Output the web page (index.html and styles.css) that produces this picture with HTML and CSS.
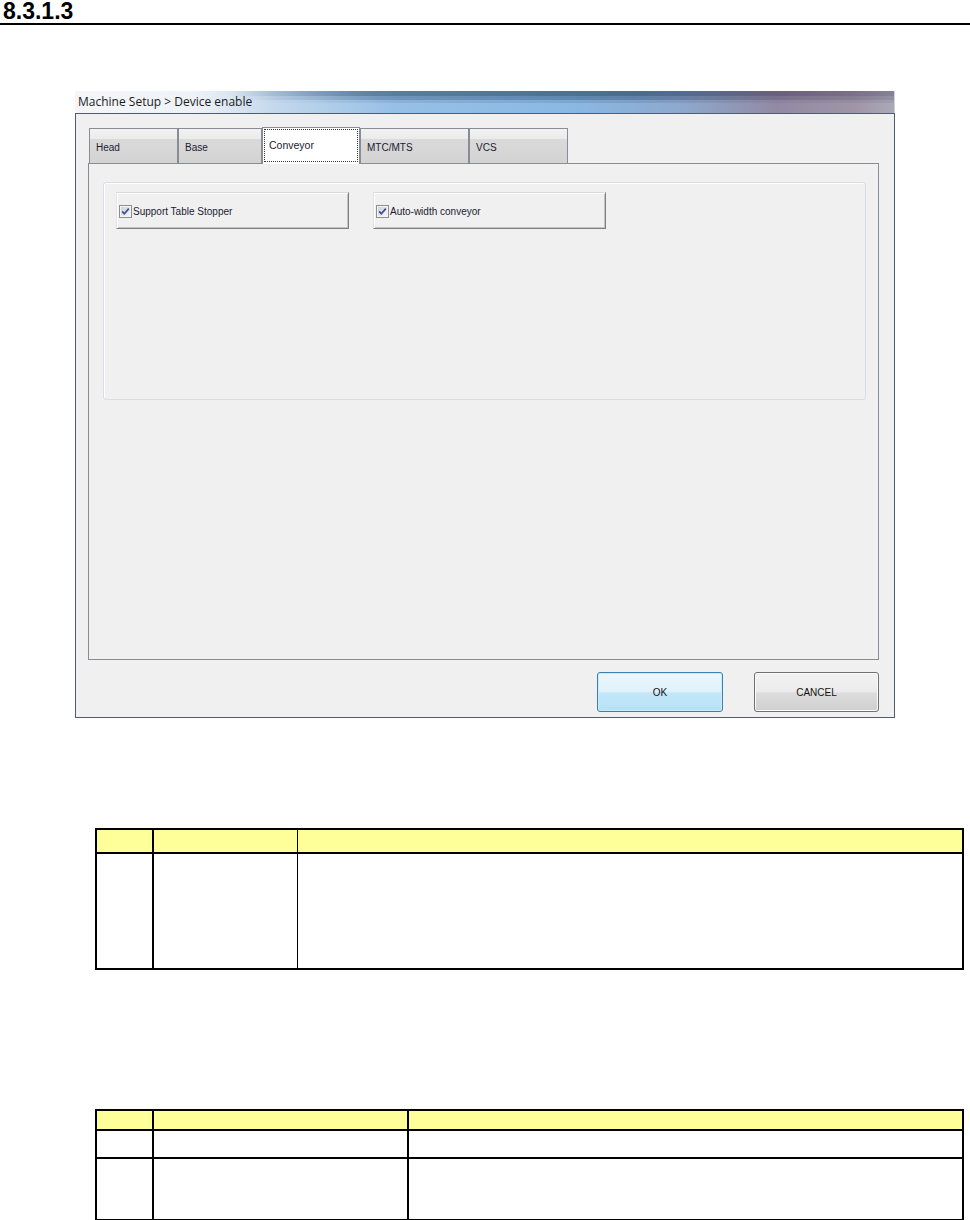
FILE: index.html
```html
<!DOCTYPE html>
<html lang="en">
<head>
    <meta charset="UTF-8">
    <meta name="viewport" content="width=device-width, initial-scale=1.0">
    <title>8.3.1.3 Device enable</title>
    <link rel="stylesheet" href="styles.css">
</head>
<body>
    <h1 class="section-no">8.3.1.3</h1>

    <div class="window">
        <div class="titlebar">Machine Setup &gt; Device enable</div>
        <div class="window-body">
            <div class="tabs">
                <div class="tab tab-head">Head</div>
                <div class="tab tab-base">Base</div>
                <div class="tab tab-conveyor active"><span class="focus">Conveyor</span></div>
                <div class="tab tab-mtc">MTC/MTS</div>
                <div class="tab tab-vcs">VCS</div>
            </div>
            <div class="tab-page">
                <div class="group">
                    <label class="check-btn">
                        <svg class="box" width="13" height="13" viewBox="0 0 13 13">
                            <defs>
                                <linearGradient id="cbFill" x1="0" y1="0" x2="1" y2="1">
                                    <stop offset="0" stop-color="#cbd3dc"/>
                                    <stop offset="1" stop-color="#f4f6f8"/>
                                </linearGradient>
                            </defs>
                            <rect x="0.5" y="0.5" width="12" height="12" fill="#f4f4f4" stroke="#8e8f8f"/>
                            <rect x="2" y="2" width="9" height="9" fill="url(#cbFill)"/>
                            <path d="M3.2 6.4 L5.3 8.8 L9.8 3.6" fill="none" stroke="#3d4f88" stroke-width="1.7"/>
                        </svg>
                        <span>Support Table Stopper</span>
                    </label>
                    <label class="check-btn">
                        <svg class="box" width="13" height="13" viewBox="0 0 13 13">
                            <rect x="0.5" y="0.5" width="12" height="12" fill="#f4f4f4" stroke="#8e8f8f"/>
                            <rect x="2" y="2" width="9" height="9" fill="url(#cbFill)"/>
                            <path d="M3.2 6.4 L5.3 8.8 L9.8 3.6" fill="none" stroke="#3d4f88" stroke-width="1.7"/>
                        </svg>
                        <span>Auto-width conveyor</span>
                    </label>
                </div>
            </div>
            <div class="dialog-buttons">
                <button class="btn btn-ok">OK</button>
                <button class="btn btn-cancel">CANCEL</button>
            </div>
        </div>
    </div>

    <table class="spec spec-1">
        <tr>
            <th class="c1"></th>
            <th class="c2"></th>
            <th class="c3"></th>
        </tr>
        <tr class="row-tall">
            <td></td>
            <td class="c2"></td>
            <td></td>
        </tr>
    </table>

    <table class="spec spec-2">
        <tr>
            <th class="c1"></th>
            <th class="c2"></th>
            <th class="c3"></th>
        </tr>
        <tr class="row-a">
            <td></td>
            <td></td>
            <td></td>
        </tr>
        <tr class="row-b">
            <td></td>
            <td></td>
            <td></td>
        </tr>
    </table>
</body>
</html>
```

FILE: styles.css
```css
body {
    margin: 0;
    background: #fff;
    font-family: "Liberation Sans", Arial, sans-serif;
    color: #000;
}

.section-no {
    margin: 0;
    padding: 0 0 1px 3px;
    font-size: 23px;
    line-height: 22px;
    font-weight: bold;
    border-bottom: 2px solid #000;
}

/* dialog window */
.window {
    width: 820px;
    margin: 66px 0 0 75px;
}

.titlebar {
    height: 22px;
    padding-left: 3px;
    font-family: "Open Sans", "Noto Sans", sans-serif;
    font-size: 12px;
    line-height: 22px;
    color: #1c1c1c;
    background:
        linear-gradient(to right, rgba(255,255,255,0) 150px, rgba(50,82,122,0.35) 290px, rgba(50,82,122,0.45) 560px, rgba(78,66,98,0.35) 700px, rgba(100,92,118,0.25) 830px) top / 100% 5px no-repeat,
        linear-gradient(to right, rgba(255,255,255,0) 160px, rgba(50,82,122,0.3) 300px, rgba(50,82,122,0.4) 560px, rgba(78,66,98,0.3) 700px, rgba(100,92,118,0.2) 830px) top / 100% 9px no-repeat,
        linear-gradient(to right, rgba(255,255,255,0) 180px, rgba(60,95,135,0.15) 320px, rgba(60,95,135,0.2) 560px, rgba(90,80,110,0.12) 720px) top / 100% 12px no-repeat,
        linear-gradient(to right, #f5f6f8 0, #eef2f7 120px, #c4d8ec 200px, #97c0e6 320px, #8ab8e2 500px, #8ea8cc 610px, #928aa4 700px, #9f95a6 780px, #aaaab9 820px);
    border-right: 1px solid #c9d4dc;
    box-sizing: border-box;
}

.window-body {
    display: flex;
    flex-direction: column;
    background: #f0f0f0;
    border: 1px solid #535c6d;
    padding: 14px 15px 5px 12px;
}

.tabs {
    display: flex;
    align-items: flex-end;
    height: 35px;
    margin-left: 1px;
}

.tab {
    box-sizing: border-box;
    height: 35px;
    padding: 13px 0 0 6px;
    font-size: 10px;
    color: #1b1b33;
    border: 1px solid #898c95;
    border-bottom: none;
    background: linear-gradient(#f2f2f2 0, #ebebeb 28%, #dadada 30%, #d3d3d3 100%);
}

.tab-head { width: 89px; }
.tab-base { width: 84px; }
.tab-conveyor { width: 98px; }
.tab-mtc { width: 109px; }
.tab-vcs { width: 99px; }

.tab.active {
    position: relative;
    z-index: 1;
    height: 37px;
    margin-bottom: -1px;
    padding: 1px;
    background: #fff;
    font-size: 10.5px;
}

.tab.active .focus {
    display: block;
    height: 33px;
    padding: 9px 0 0 4px;
    box-sizing: border-box;
    border: 1px dotted #333;
}

.tab-page {
    box-sizing: border-box;
    width: 791px;
    height: 497px;
    border: 1px solid #898c95;
    background: #f0f0f0;
    padding: 18px 0 0 14px;
}

.group {
    box-sizing: border-box;
    width: 763px;
    height: 218px;
    border: 1px solid #d5dfe5;
    border-radius: 3px;
    box-shadow: inset 1px 1px 0 #fff;
    padding: 9px 0 0 12px;
    display: flex;
    gap: 24px;
    align-items: flex-start;
}

.check-btn {
    box-sizing: border-box;
    width: 233px;
    height: 37px;
    display: flex;
    align-items: center;
    gap: 1px;
    padding: 1px 0 0 2px;
    font-size: 10px;
    color: #1b1b33;
    background: #f0f0f0;
    border: 1px solid;
    border-color: #dcdcdc #7f7f7f #7f7f7f #e4e4e4;
    box-shadow: inset 1px 1px 0 #fff, inset -1px -1px 0 #c4c4c4;
}

.dialog-buttons {
    display: flex;
    justify-content: flex-end;
    gap: 31px;
    margin-top: 12px;
}

.btn {
    height: 40px;
    border-radius: 3px;
    font-family: "Liberation Sans", Arial, sans-serif;
    font-size: 10px;
    color: #111;
    padding: 0;
}

.btn-ok {
    width: 126px;
    border: 1px solid #3c7fb1;
    background: linear-gradient(#eaf6fd 0, #dff2fc 50%, #c4e7f9 52%, #b6e0f6 100%);
    box-shadow: inset 0 0 0 1px #c8ecfb;
}

.btn-cancel {
    width: 125px;
    border: 1px solid #707070;
    background: linear-gradient(#f2f2f2 0, #ebebeb 50%, #dddddd 52%, #cfcfcf 100%);
    box-shadow: inset 0 0 0 1px #fafafa;
}

/* spec tables */
.spec {
    border-collapse: separate;
    border-spacing: 0;
    table-layout: fixed;
    width: 869px;
    margin-left: 95px;
    border-top: 2px solid #000;
    border-left: 2px solid #000;
}

.spec th,
.spec td {
    box-sizing: border-box;
    padding: 0;
    border-right: 2px solid #000;
    border-bottom: 2px solid #000;
}

.spec th {
    background: #ffff99;
}

.spec-1 {
    margin-top: 110px;
}

.spec-1 th { height: 24px; }
.spec-1 .c1 { width: 57px; }
.spec-1 .c2 { width: 144px; border-right-width: 1px; }
.spec-1 .c3 { width: 666px; }
.spec-1 .row-tall td { height: 116px; }

.spec-2 {
    margin-top: 139px;
}

.spec-2 th { height: 20px; }
.spec-2 .c1 { width: 57px; }
.spec-2 .c2 { width: 255px; }
.spec-2 .c3 { width: 555px; }
.spec-2 .row-a td { height: 28px; }
.spec-2 .row-b td { height: 62px; }
```
